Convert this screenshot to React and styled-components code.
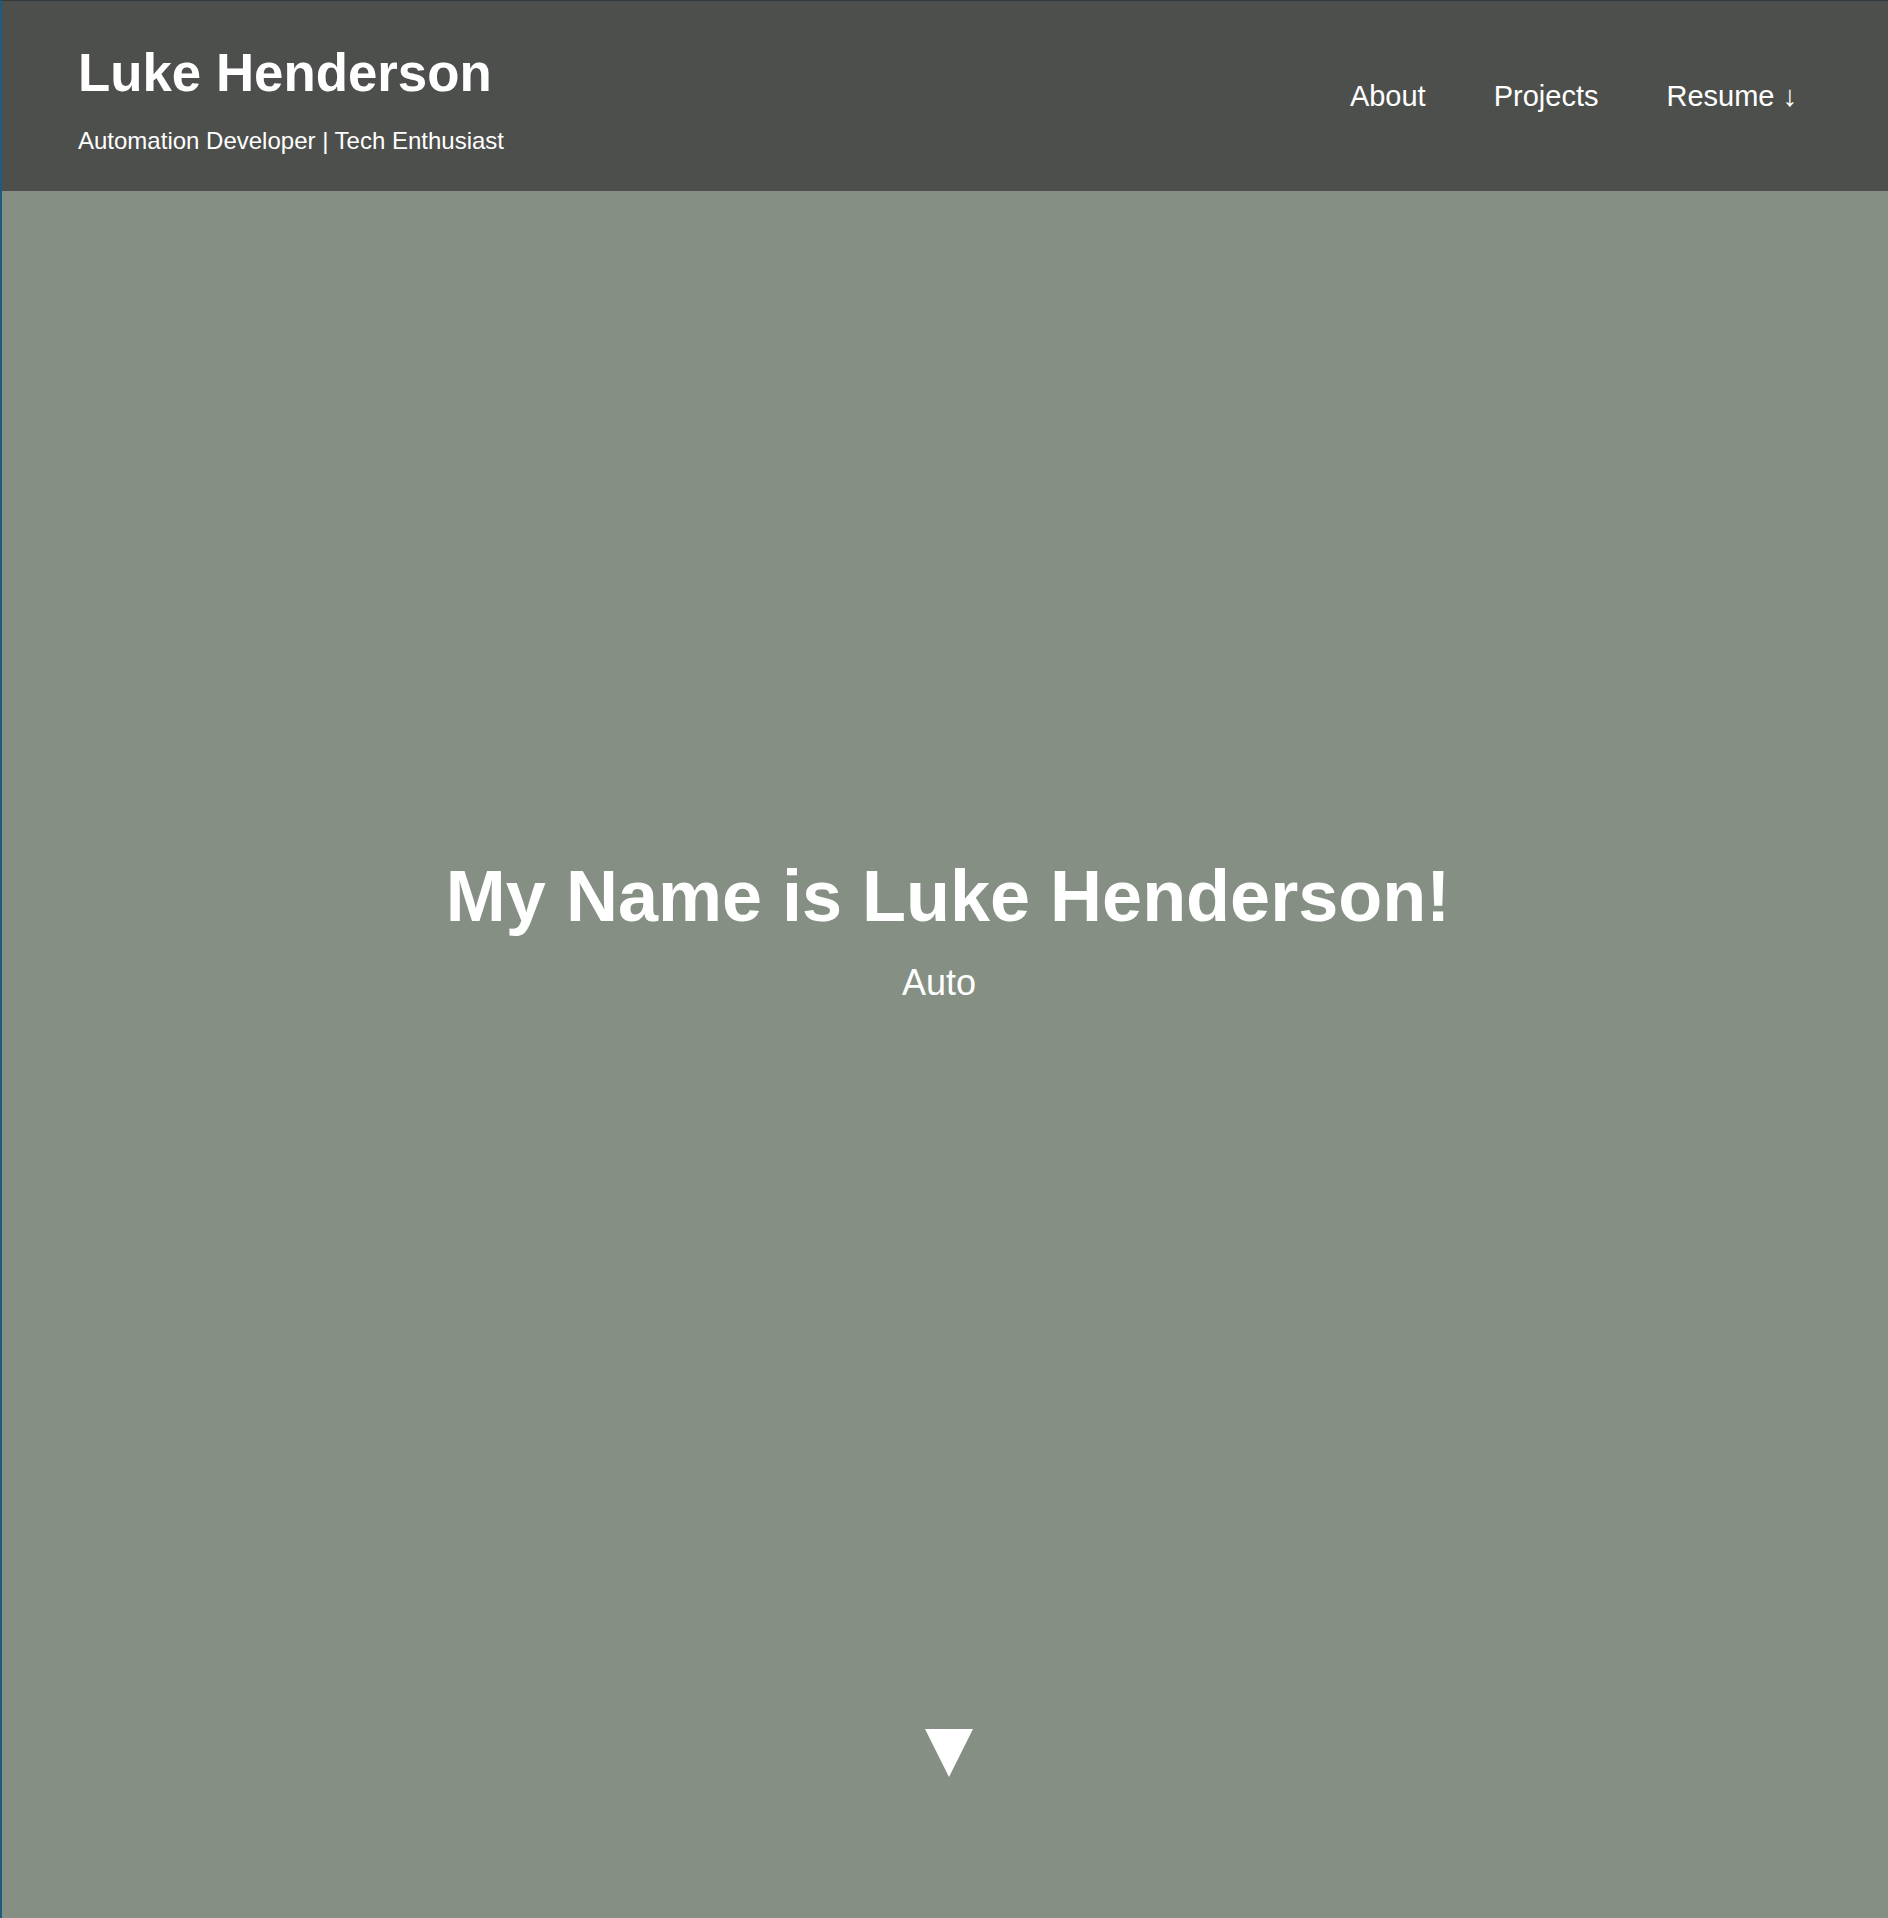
import React from "react";
import styled, { createGlobalStyle } from "styled-components";

const Global = createGlobalStyle`
  html, body { margin: 0; padding: 0; }
  body {
    font-family: "Liberation Sans", Arial, Helvetica, sans-serif;
    background: #858f83;
    color: #ffffff;
  }
  * { box-sizing: border-box; }
`;

const Page = styled.div`
  min-height: 1918px;
  display: flex;
  flex-direction: column;
  border-left: 2px solid #1f5b80;
  border-top: 1px solid #2f3a3e;
`;

const Header = styled.header`
  height: 190px;
  background: #4d4f4c;
  display: flex;
  justify-content: space-between;
  align-items: flex-start;
  padding: 40px 91px 0 76px;
`;

const Brand = styled.div`
  display: flex;
  flex-direction: column;
`;

const Title = styled.h1`
  margin: 0;
  font-size: 52.8px;
  line-height: 1.2;
  font-weight: 700;
  color: #ffffff;
`;

const Tagline = styled.p`
  margin: 23px 0 0;
  font-size: 24px;
  line-height: 1.2;
  color: #ffffff;
`;

const Nav = styled.nav`
  display: flex;
  gap: 68px;
  margin-top: 38px;
`;

const NavLink = styled.a`
  font-size: 29px;
  line-height: 1.2;
  color: #ffffff;
  text-decoration: none;
`;

const Hero = styled.main`
  flex: 1;
  display: flex;
  flex-direction: column;
  align-items: center;
  padding: 662px 0 141px;
`;

const Headline = styled.h2`
  margin: 0 0 0 6px;
  font-size: 72px;
  line-height: 1.2;
  font-weight: 700;
  color: #ffffff;
  text-align: center;
`;

const Typed = styled.p`
  margin: 22px 12px 0 0;
  font-size: 36px;
  line-height: 1.2;
  color: #ffffff;
`;

const ScrollArrow = styled.a`
  margin-top: auto;
  width: 0;
  height: 0;
  border-left: 24.5px solid transparent;
  border-right: 24.5px solid transparent;
  border-top: 48px solid #ffffff;
  transform: translateX(4px);
`;

export default function App() {
  return (
    <>
      <Global />
      <Page>
        <Header>
          <Brand>
            <Title>Luke Henderson</Title>
            <Tagline>Automation Developer | Tech Enthusiast</Tagline>
          </Brand>
          <Nav>
            <NavLink href="#about">About</NavLink>
            <NavLink href="#projects">Projects</NavLink>
            <NavLink href="#resume">Resume ↓</NavLink>
          </Nav>
        </Header>
        <Hero>
          <Headline>My Name is Luke Henderson!</Headline>
          <Typed>Auto</Typed>
          <ScrollArrow href="#about" aria-label="Scroll down" />
        </Hero>
      </Page>
    </>
  );
}
